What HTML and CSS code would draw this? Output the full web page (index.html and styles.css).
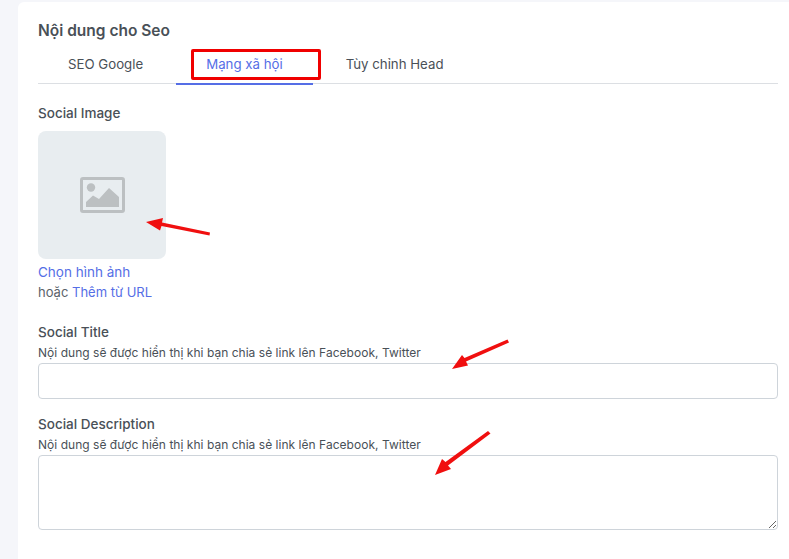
FILE: index.html
```html
<!DOCTYPE html>
<html lang="en">
<head>
  <meta name="viewport" content="width=device-width, initial-scale=1.0">
  <title>Nội dung cho Seo</title>
  <link rel="stylesheet" href="styles.css">
</head>
<body>
  <div class="seo-card">
    <h3 class="card-title">Nội dung cho Seo</h3>
    <div class="tabs">
      <a class="tab">SEO Google</a>
      <a class="tab active">Mạng xã hội</a>
      <a class="tab">Tùy chỉnh Head</a>
    </div>

    <div class="field field-image">
      <label class="field-label">Social Image</label>
      <div class="image-box">
        <svg class="image-icon" width="46" height="38" viewBox="0 0 46 38">
          <rect x="1.5" y="1.5" width="42" height="33" rx="1.5" fill="none" stroke="#bcc0c2" stroke-width="3"/>
          <circle cx="11" cy="10.5" r="4.2" fill="#bcc0c2"/>
          <path d="M6 30 V25 L13 18.5 L19 22 L29 11 L39 20 V30 Z" fill="#bcc0c2"/>
        </svg>
      </div>
      <a class="link pick-link">Chọn hình ảnh</a>
      <div class="url-line">hoặc <a class="link">Thêm từ URL</a></div>
    </div>

    <div class="field field-title">
      <label class="field-label">Social Title</label>
      <p class="field-help">Nội dung sẽ được hiển thị khi bạn chia sẻ link lên Facebook, Twitter</p>
      <input type="text" class="text-input">
    </div>

    <div class="field">
      <label class="field-label">Social Description</label>
      <p class="field-help">Nội dung sẽ được hiển thị khi bạn chia sẻ link lên Facebook, Twitter</p>
      <textarea class="text-input text-area"></textarea>
    </div>
  </div>

  <!-- red marks drawn on top of the screenshot -->
  <div class="tab-mark"></div>
  <svg class="arrows" width="789" height="559" viewBox="0 0 789 559">
    <g fill="#f00f0f" stroke="none">
      <path d="M146 222 L163 218 L162 222.5 L210 232.5 L209.5 235.5 L161.5 226 L160 230.5 Z"/>
      <path d="M452 369 L462 355 L464.5 358 L507.5 339.5 L509 342.5 L466 361.5 L468 365.5 Z"/>
      <path d="M435 475 L442 459 L445.5 462 L488 431 L490.5 433.5 L448 465.5 L451 469 Z"/>
    </g>
  </svg>
</body>
</html>
```

FILE: styles.css
```css
html, body {
  height: 100%;
}
body {
  margin: 0;
  padding: 2px 0 0 18px;
  box-sizing: border-box;
  overflow: hidden;
  background-color: #f5f6fa;
  font-family: 'Inter', 'Open Sans', sans-serif;
  color: #495057;
  position: relative;
}
.seo-card {
  background-color: #ffffff;
  border-radius: 6px 0 0 0;
  padding: 19px 11px 30px 20px;
  min-height: 100%;
  box-sizing: border-box;
}
.card-title {
  margin: 0;
  font-size: 15.5px;
  line-height: 20px;
  font-weight: 600;
  color: #495057;
}
.tabs {
  display: flex;
  gap: 3px;
  margin-top: 4px;
  height: 38px;
  border-bottom: 1px solid #dcdfe3;
}
.tab {
  padding: 0 30px;
  font-size: 13.25px;
  line-height: 38px;
  height: 38px;
  color: #495057;
}
.tab.active {
  color: #556ee6;
  border-bottom: 2px solid #556ee6;
}
.field-image {
  margin-top: 19px;
}
.field-title {
  margin-top: 20px;
}
.field {
  margin-bottom: 15px;
}
.field-label {
  display: block;
  font-size: 13.5px;
  line-height: 20px;
  font-weight: 500;
  color: #495057;
}
.image-box {
  display: flex;
  align-items: center;
  justify-content: center;
  width: 128px;
  height: 128px;
  margin-top: 8px;
  background-color: #e8edf0;
  border-radius: 8px;
}
.image-icon {
  margin: 2px 0 0 2px;
}
.link {
  color: #556ee6;
}
.pick-link {
  display: block;
  margin-top: 3px;
  font-size: 13.5px;
  line-height: 20px;
}
.url-line {
  font-size: 13px;
  line-height: 20px;
  color: #5b636a;
}
.field-help {
  margin: 1px 0 0;
  font-size: 12px;
  line-height: 20px;
  letter-spacing: 0.03px;
  color: #495057;
}
.text-input {
  display: block;
  width: 100%;
  height: 36px;
  margin: 0;
  padding: 8px 12px;
  box-sizing: border-box;
  background-color: #ffffff;
  border: 1px solid #ced4da;
  border-radius: 4px;
  font-family: inherit;
  font-size: 13px;
  outline: none;
}
.text-area {
  height: 75px;
  resize: vertical;
}
.tab-mark {
  position: absolute;
  left: 191px;
  top: 49px;
  width: 130px;
  height: 31px;
  box-sizing: border-box;
  border: 3px solid #f00000;
  border-radius: 2px;
}
.arrows {
  position: absolute;
  left: 0;
  top: 0;
  pointer-events: none;
}
```
